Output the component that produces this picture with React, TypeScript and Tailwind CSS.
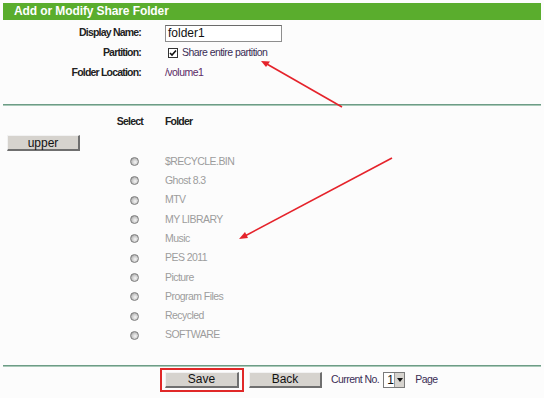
import React from "react";

const folders = [
  "$RECYCLE.BIN",
  "Ghost 8.3",
  "MTV",
  "MY LIBRARY",
  "Music",
  "PES 2011",
  "Picture",
  "Program Files",
  "Recycled",
  "SOFTWARE",
];

function Radio() {
  return (
    <span className="block w-[9px] h-[9px] rounded-full border border-[#7e7e7e] bg-[radial-gradient(circle_at_60%_60%,#f6f6f6_0%,#cacaca_50%,#858585_100%)]" />
  );
}

function Btn({ children, w }: { children: React.ReactNode; w: string }) {
  return (
    <div
      className={`${w} h-[16px] flex items-center justify-center bg-[#d6d3ce] border-t border-l border-t-[#f2f2f2] border-l-[#f2f2f2] border-r-2 border-b-2 border-r-[#6f6f6f] border-b-[#6f6f6f] text-[12px] tracking-normal text-[#111] leading-none`}
    >
      {children}
    </div>
  );
}

export default function App() {
  return (
    <div className="relative w-[544px] h-[398px] bg-[#fcfcfc] font-['Liberation_Sans',Arial,sans-serif] text-[10.5px] tracking-[-0.55px] overflow-hidden">
      <div className="px-[3px] pt-[3px]">
        <div className="h-[17px] bg-[#5aad2d] text-white font-bold text-[12px] tracking-[-0.1px] leading-[17px] pl-[11px]">
          Add or Modify Share Folder
        </div>
      </div>

      {/* form */}
      <div className="mt-[3px] grid grid-cols-[141px_1fr] gap-x-[24px] auto-rows-[20px] items-center">
        <div className="text-right font-bold tracking-[-0.8px] text-[#222]">Display Name:</div>
        <div className="flex items-center">
          <div className="w-[117px] h-[17px] border border-[#8e8e8e] border-t-[#6a6a6a] bg-white pl-[2px] text-[12px] tracking-normal leading-[15px] text-[#111]">
            folder1
          </div>
        </div>
        <div className="text-right font-bold tracking-[-0.8px] text-[#222]">Partition:</div>
        <div className="flex items-center pl-[3px] gap-[4px]">
          <span className="relative w-[10px] h-[10px] border border-[#333] bg-white flex items-center justify-center">
            <svg width="8" height="8" viewBox="0 0 8 8">
              <path d="M1 4 L3 6 L7 1.5" stroke="#111" strokeWidth="1.6" fill="none" />
            </svg>
          </span>
          <span className="text-[#3a2d55]">Share entire partition</span>
        </div>
        <div className="text-right font-bold tracking-[-0.8px] text-[#222]">Folder Location:</div>
        <div className="text-[#5a2a66]">/volume1</div>
      </div>

      <div className="mx-[3px] mt-[21px] h-[2px] bg-[#6d9c86] border-b border-b-[#a9c9b8]" />

      {/* folder list */}
      <div className="mt-[7px] grid grid-cols-[143px_1fr] gap-x-[22px] h-[18px] items-center font-bold tracking-[-0.8px] text-[#222]">
        <div className="text-right">Select</div>
        <div>Folder</div>
      </div>
      <div className="mt-[4px] pl-[7px]">
        <Btn w="w-[73px]">upper</Btn>
      </div>
      <div className="mt-[1px] flex flex-col">
        {folders.map((f) => (
          <div key={f} className="h-[19.3px] grid grid-cols-[165px_1fr] items-center">
            <div className="pl-[130px]">
              <Radio />
            </div>
            <div className="text-[#9c9c9c]">{f}</div>
          </div>
        ))}
      </div>

      <div className="mx-[3px] mt-[20px] h-[2px] bg-[#6d9c86] border-b border-b-[#a9c9b8]" />

      {/* bottom actions */}
      <div className="mt-[1px] flex items-center pl-[160px]">
        <div className="border-2 border-[#e02828] px-[3px] py-[2px]">
          <Btn w="w-[74px]">Save</Btn>
        </div>
        <div className="ml-[5px]">
          <Btn w="w-[73px]">Back</Btn>
        </div>
        <span className="ml-[9px] text-[#3a2d55]">Current No.</span>
        <div className="ml-[4px] w-[22px] h-[16px] border border-[#7a7a7a] bg-white flex items-center">
          <span className="flex-1 pl-[3px] text-[12px] tracking-normal leading-none text-[#111]">1</span>
          <span className="w-[10px] h-full bg-[#d6d3ce] border-l border-[#999] flex items-center justify-center">
            <svg width="6" height="4" viewBox="0 0 6 4">
              <path d="M0 0 H6 L3 4 Z" fill="#111" />
            </svg>
          </span>
        </div>
        <span className="ml-[10px] text-[#3a2d55]">Page</span>
      </div>

      {/* annotation arrows */}
      <svg className="absolute inset-0 pointer-events-none" width="544" height="398" viewBox="0 0 544 398">
        <line x1="342" y1="107" x2="266" y2="63.5" stroke="#e5232b" strokeWidth="1.6" />
        <polygon points="261,61 270,61.5 266,67" fill="#e5232b" />
        <line x1="392" y1="158" x2="244" y2="236.5" stroke="#e5232b" strokeWidth="1.6" />
        <polygon points="239,239 245,232 248,238" fill="#e5232b" />
      </svg>
    </div>
  );
}
